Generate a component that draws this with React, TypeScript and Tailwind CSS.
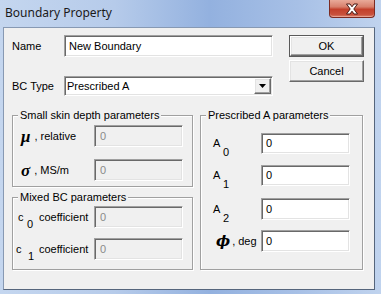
const sunken =
    "border border-t-[#a0a0a0] border-l-[#a0a0a0] border-b-white border-r-white shadow-[inset_1px_1px_0_#696969,inset_-1px_-1px_0_#e3e3e3]"
const raised =
    "border border-t-white border-l-white border-b-[#696969] border-r-[#696969] shadow-[inset_-1px_-1px_0_#a0a0a0,inset_1px_1px_0_#e3e3e3]"
const group = "border border-[#a0a0a0] shadow-[inset_1px_1px_0_#fff,1px_1px_0_#fff]"
const legend = "-mt-[7px] ml-[5px] px-[2px] w-fit bg-[#f0f0f0] leading-[13px]"
const greek = "font-['Liberation_Serif','DejaVu_Serif',serif] italic font-bold text-[17px] leading-[17px]"

const Field = ({value, w, h, disabled}: {value: string; w: string; h: string; disabled?: boolean}) => (
    <div
        className={`${sunken} ${w} ${h} flex items-center leading-[13px] ${
            disabled ? "bg-[#f0f0f0] text-[#8a8a8a] pl-[5px]" : "bg-white text-black pl-[4px]"
        }`}
    >
        {value}
    </div>
)

const Sub = ({main, sub, mainW, subDown}: {main: string; sub: string; mainW: string; subDown: string}) => (
    <span className="flex items-center">
        <span className={`inline-block ${mainW}`}>{main}</span>
        <span className={`inline-block ${subDown}`}>{sub}</span>
    </span>
)

const App = () => {
    return (
        <div className="w-[381px] h-[294px] flex flex-col overflow-hidden bg-[linear-gradient(90deg,#c4d6ef_0%,#b6cbea_30%,#93b1df_55%,#a7c0e6_78%,#c0d3ee_100%)] font-['Liberation_Sans',Arial,sans-serif] text-[11px] text-black">
            {/* title bar */}
            <div className="h-[27px] shrink-0 flex items-start">
                <div className="pl-[5px] pt-[5px] text-[12px] leading-[16px] font-['Noto_Sans',sans-serif] text-[#1a1a1a]">
                    Boundary Property
                </div>
                <div className="ml-auto mr-[6px] w-[46px] h-[18px] flex items-center justify-center rounded-b-[4px] border border-t-0 border-[#7c2b22] bg-[linear-gradient(180deg,#e9aa99_0%,#d8806c_40%,#c3402b_55%,#c8503b_85%,#d9826f_100%)] shadow-[inset_0_-1px_0_#e8a08f]">
                    <svg width="14" height="12" viewBox="0 0 14 12">
                        <path
                            d="M1.5 1 H5 L7 3.8 L9 1 H12.5 L8.8 6 L12.5 11 H9 L7 8.2 L5 11 H1.5 L5.2 6 Z"
                            fill="#fff"
                            stroke="#4a1a14"
                            strokeWidth="1"
                            strokeLinejoin="round"
                        />
                    </svg>
                </div>
            </div>

            {/* client area */}
            <div className="ml-[3px] w-[372px] h-[263px] border border-t-[#8799b3] border-l-[#8799b3] border-b-[#55657c] border-r-[#55657c] bg-[#f0f0f0]">
                <div className="flex">
                    <div className="pl-[8px]">
                        <div className="mt-[7px] h-[22px] flex items-center">
                            <div className="w-[52px]">Name</div>
                            <Field value="New Boundary" w="w-[209px]" h="h-[22px]" />
                        </div>
                        <div className="mt-[19px] h-[20px] flex items-center">
                            <div className="w-[52px]">BC Type</div>
                            <div className={`${sunken} w-[209px] h-[20px] bg-white flex items-center pl-[2px] pr-[1px]`}>
                                <span className="leading-[13px]">Prescribed A</span>
                                <div className={`${raised} ml-auto w-[17px] h-[16px] bg-[#f0f0f0] flex items-center justify-center`}>
                                    <svg width="7" height="4" viewBox="0 0 7 4">
                                        <path d="M0 0 H7 L3.5 4 Z" fill="#000" />
                                    </svg>
                                </div>
                            </div>
                        </div>
                    </div>
                    <div className="ml-[16px] w-[75px] pt-[7px] flex flex-col gap-[3px]">
                        <div className="h-[22px] border border-[#5a5a5a]">
                            <div className={`${raised} h-full bg-[#f0f0f0] flex items-center justify-center`}>OK</div>
                        </div>
                        <div className={`${raised} h-[22px] bg-[#f0f0f0] flex items-center justify-center`}>Cancel</div>
                    </div>
                </div>

                <div className="mt-[19px] pl-[8px] flex">
                    <div className="w-[181px]">
                        <div className={group}>
                            <div className={legend}>Small skin depth parameters</div>
                            <div className="mt-[3px] h-[22px] flex items-center pl-[8px]">
                                <div className="w-[73px] flex items-center">
                                    <span className={greek}>μ</span>
                                    <span className="ml-[4px]">, relative</span>
                                </div>
                                <Field value="0" w="w-[89px]" h="h-[22px]" disabled />
                            </div>
                            <div className="mt-[12px] mb-[5px] h-[22px] flex items-center pl-[8px]">
                                <div className="w-[73px] flex items-center">
                                    <span className={greek}>σ</span>
                                    <span className="ml-[4px]">, MS/m</span>
                                </div>
                                <Field value="0" w="w-[89px]" h="h-[22px]" disabled />
                            </div>
                        </div>

                        <div className={`${group} mt-[10px]`}>
                            <div className={legend}>Mixed BC parameters</div>
                            <div className="mt-[2px] h-[22px] flex items-center pl-[5px]">
                                <div className="w-[76px] flex items-center">
                                    <Sub main="c" sub="0" mainW="w-[9px]" subDown="w-[12px] translate-y-[7px]" />
                                    <span>coefficient</span>
                                </div>
                                <Field value="0" w="w-[89px]" h="h-[22px]" disabled />
                            </div>
                            <div className="mt-[10px] mb-[9px] h-[22px] flex items-center pl-[3px]">
                                <div className="w-[78px] flex items-center">
                                    <Sub main="c" sub="1" mainW="w-[12px]" subDown="w-[11px] translate-y-[7px]" />
                                    <span>coefficient</span>
                                </div>
                                <Field value="0" w="w-[89px]" h="h-[22px]" disabled />
                            </div>
                        </div>
                    </div>

                    <div className={`${group} ml-[7px] w-[163px] self-start`}>
                        <div className={legend}>Prescribed A parameters</div>
                        <div className="mt-[11px] h-[21px] flex items-center pl-[12px]">
                            <div className="w-[48px]">
                                <Sub main="A" sub="0" mainW="w-[10px]" subDown="translate-y-[9px]" />
                            </div>
                            <Field value="0" w="w-[89px]" h="h-[21px]" />
                        </div>
                        <div className="mt-[11px] h-[21px] flex items-center pl-[12px]">
                            <div className="w-[48px]">
                                <Sub main="A" sub="1" mainW="w-[10px]" subDown="translate-y-[9px]" />
                            </div>
                            <Field value="0" w="w-[89px]" h="h-[21px]" />
                        </div>
                        <div className="mt-[12px] h-[22px] flex items-center pl-[12px]">
                            <div className="w-[48px]">
                                <Sub main="A" sub="2" mainW="w-[10px]" subDown="translate-y-[9px]" />
                            </div>
                            <Field value="0" w="w-[89px]" h="h-[22px]" />
                        </div>
                        <div className="mt-[10px] mb-[17px] h-[22px] flex items-center pl-[12px]">
                            <div className="w-[48px] flex items-center">
                                <span className="ml-[3px] font-['DejaVu_Serif',serif] italic font-bold text-[15px] leading-[17px]">ϕ</span>
                                <span className="ml-[2px]">, deg</span>
                            </div>
                            <Field value="0" w="w-[89px]" h="h-[22px]" />
                        </div>
                    </div>
                </div>
            </div>
        </div>
    )
}

export default App
